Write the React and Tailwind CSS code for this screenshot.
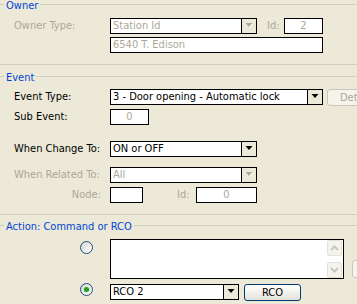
import React from "react";

const FONT = { fontFamily: '"DejaVu Sans Condensed", "DejaVu Sans", sans-serif' };

function GroupHeader({ title }) {
  return (
    <div className="flex h-[14px]">
      <div className="w-[4px] h-0 mt-[4px] border-t border-[#D0D0BF] shrink-0" />
      <span className="px-[2px] leading-[12px] text-[#0046D5] whitespace-nowrap shrink-0">{title}</span>
      <div className="flex-1 h-0 mt-[4px] border-t border-[#D0D0BF]" />
    </div>
  );
}

function Arrow({ disabled }) {
  return (
    <svg width="8" height="6" viewBox="0 0 8 6">
      {disabled && <path d="M1.5 1 L8 1 L4.75 5 Z" fill="#fff" />}
      <path d="M0.5 0 L7.5 0 L4 4 Z" fill={disabled ? "#ACA899" : "#000"} />
    </svg>
  );
}

function Combo({ w, text, disabled }) {
  return (
    <div className={`flex shrink-0 h-[16px] border border-black bg-white ${w}`}>
      <div className={`flex-1 pl-[2px] leading-[14px] whitespace-nowrap overflow-hidden ${disabled ? "text-[#ACA899]" : "text-black"}`}>{text}</div>
      <div className="w-[15px] shrink-0 border-l border-black bg-[#ECE9D8] flex items-center justify-center">
        <Arrow disabled={disabled} />
      </div>
    </div>
  );
}

function Box({ w, text, center, dim = true }) {
  return (
    <div className={`shrink-0 h-[16px] border border-black bg-white leading-[14px] whitespace-nowrap overflow-hidden ${w} ${center ? "text-center" : "pl-[2px]"} ${dim ? "text-[#ACA899]" : "text-black"}`}>
      {text}
    </div>
  );
}

function Radio({ checked }) {
  return (
    <div className="w-[13px] h-[13px] rounded-full border border-[#1C5180] bg-gradient-to-br from-[#D6D5CE] to-white flex items-center justify-center">
      {checked && <div className="w-[5px] h-[5px] rounded-full bg-[#21A121] shadow-[0_0_1px_#8EE08E]" />}
    </div>
  );
}

function ScrollBtn({ up }) {
  return (
    <div className="w-[15px] h-[16px] rounded-[2px] border border-[#E4E1D5] bg-[#F4F3EE] flex items-center justify-center">
      <svg width="9" height="6" viewBox="0 0 9 6">
        <path d={up ? "M1 5 L4.5 1.5 L8 5" : "M1 1 L4.5 4.5 L8 1"} stroke="#C9C7BA" strokeWidth="2" fill="none" />
      </svg>
    </div>
  );
}

export default function App() {
  const lbl = "w-[110px] shrink-0 pl-[14px] leading-[16px] whitespace-nowrap";
  return (
    <div className="w-[357px] h-[304px] overflow-hidden bg-[#ECE9D8] text-[11px] text-black" style={FONT}>
      {/* Owner */}
      <GroupHeader title="Owner" />
      <div className="flex mt-[4px] h-[16px]">
        <div className={`${lbl} text-[#ACA899]`}>Owner Type:</div>
        <Combo w="w-[147px]" text="Station Id" disabled />
        <div className="ml-[10px] w-[17px] shrink-0 leading-[16px] text-[#ACA899]">Id:</div>
        <Box w="w-[39px]" text="2" center />
      </div>
      <div className="flex mt-[3px] h-[16px]">
        <div className="w-[110px] shrink-0" />
        <Box w="w-[213px]" text="6540 T. Edison" />
      </div>
      <div className="mt-[11px] h-0 border-t border-[#D0D0BF]" />

      {/* Event */}
      <div className="mt-[7px]">
        <GroupHeader title="Event" />
      </div>
      <div className="flex mt-[3px] h-[16px]">
        <div className={lbl}>Event Type:</div>
        <Combo w="w-[213px]" text="3 - Door opening - Automatic lock" />
        <div className="ml-[4px] w-[70px] h-[17px] shrink-0 rounded-[3px] border border-[#C9C7BA] bg-[#F5F4EA] pl-[12px] leading-[15px] whitespace-nowrap text-[#ACA899]">Details...</div>
      </div>
      <div className="flex mt-[4px] h-[16px]">
        <div className={lbl}>Sub Event:</div>
        <Box w="w-[39px]" text="0" center />
      </div>
      <div className="flex mt-[16px] h-[16px]">
        <div className={lbl}>When Change To:</div>
        <Combo w="w-[147px]" text="ON or OFF" />
      </div>
      <div className="flex mt-[10px] h-[16px]">
        <div className={`${lbl} text-[#ACA899]`}>When Related To:</div>
        <Combo w="w-[147px]" text="All" disabled />
      </div>
      <div className="flex mt-[4px] h-[16px]">
        <div className="w-[110px] shrink-0 pr-[9px] text-right leading-[16px] text-[#ACA899]">Node:</div>
        <Box w="w-[33px]" text="" />
        <div className="ml-[34px] w-[19px] shrink-0 leading-[16px] text-[#ACA899]">Id:</div>
        <Box w="w-[61px]" text="0" center />
      </div>
      <div className="mt-[11px] h-0 border-t border-[#D0D0BF]" />

      {/* Action */}
      <div className="mt-[6px]">
        <GroupHeader title="Action: Command or RCO" />
      </div>
      <div className="flex mt-[4px] h-[40px]">
        <div className="pl-[80px] pt-[2px] shrink-0">
          <Radio />
        </div>
        <div className="ml-[17px] w-[234px] h-[40px] shrink-0 border border-black bg-white flex justify-end">
          <div className="flex flex-col justify-between pr-[1px]">
            <ScrollBtn up />
            <ScrollBtn />
          </div>
        </div>
        <div className="ml-[8px] mt-[21px] w-[20px] h-[18px] rounded-[3px] border border-[#C9C7BA] bg-[#F5F4EA] shrink-0" />
      </div>
      <div className="flex mt-[5px] h-[16px]">
        <div className="pl-[80px] -mt-[1px] shrink-0">
          <Radio checked />
        </div>
        <div className="ml-[17px] shrink-0">
          <Combo w="w-[129px]" text="RCO 2" />
        </div>
        <div className="ml-[5px] w-[57px] h-[17px] shrink-0 rounded-[3px] border border-[#003C74] bg-gradient-to-b from-white to-[#E3E2DA] text-center leading-[15px]">RCO</div>
      </div>
    </div>
  );
}
